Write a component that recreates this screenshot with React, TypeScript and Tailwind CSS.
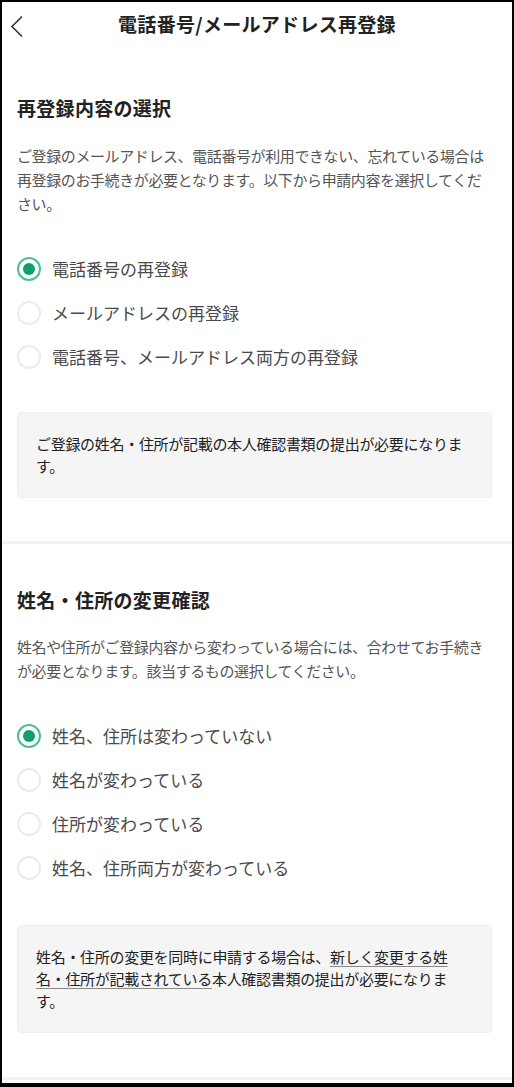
import { useState } from "react";

const FONT = { fontFamily: '"Noto Sans CJK JP", "Noto Sans", sans-serif' };

type Option = { id: string; label: string };

const CONTACT_OPTIONS: Option[] = [
  { id: "tel", label: "電話番号の再登録" },
  { id: "mail", label: "メールアドレスの再登録" },
  { id: "both", label: "電話番号、メールアドレス両方の再登録" },
];

const PROFILE_OPTIONS: Option[] = [
  { id: "none", label: "姓名、住所は変わっていない" },
  { id: "name", label: "姓名が変わっている" },
  { id: "address", label: "住所が変わっている" },
  { id: "both", label: "姓名、住所両方が変わっている" },
];

function RadioList({
  options,
  value,
  onChange,
}: {
  options: Option[];
  value: string;
  onChange: (id: string) => void;
}) {
  return (
    <div className="flex flex-col">
      {options.map((opt) => {
        const checked = opt.id === value;
        return (
          <button
            key={opt.id}
            type="button"
            onClick={() => onChange(opt.id)}
            className="flex h-[44px] items-center gap-[11px] text-left"
          >
            <span
              className={`flex h-[24px] w-[24px] shrink-0 items-center justify-center rounded-full border-2 ${
                checked ? "border-[#4dbf96]" : "border-[#ececec]"
              }`}
            >
              {checked ? <span className="h-[12px] w-[12px] rounded-full bg-[#0e9f6e]" /> : null}
            </span>
            <span className="text-[17px] leading-[24px] text-[#4a4a4a]">{opt.label}</span>
          </button>
        );
      })}
    </div>
  );
}

export default function App() {
  const [contact, setContact] = useState("tel");
  const [profile, setProfile] = useState("none");

  return (
    <div className="min-h-screen bg-black pt-[2px] pl-[2px] pr-[2px] pb-[4px]" style={FONT}>
      <main className="min-h-[1081px] bg-white">
        <header className="relative flex h-[50px] items-center justify-center pb-[6px]">
          <button type="button" className="absolute left-[5px] top-[11px] p-0.5 text-[#333]">
            <svg width="16" height="23" viewBox="0 0 16 23" fill="none">
              <path d="M13 1.5 L3 11.5 L13 21.5" stroke="currentColor" strokeWidth="1.6" />
            </svg>
          </button>
          <h1 className="text-[19px] font-bold leading-[28px] tracking-[0.3px] text-[#222]">
            電話番号/メールアドレス再登録
          </h1>
        </header>

        <section className="pl-[15px] pr-[20px] pt-[42px] pb-[43px]">
          <h2 className="text-[19px] font-bold leading-[28px] tracking-[0.3px] text-[#222]">再登録内容の選択</h2>
          <p className="mt-[22px] text-[15px] leading-[24px] tracking-[-0.4px] text-[#555]">
            ご登録のメールアドレス、電話番号が利用できない、忘れている場合は再登録のお手続きが必要となります。以下から申請内容を選択してください。
          </p>
          <div className="mt-[31px]">
            <RadioList options={CONTACT_OPTIONS} value={contact} onChange={setContact} />
          </div>
          <div className="mt-[33px] rounded-[4px] border border-[#efefef] bg-[#f5f5f5] px-[18px] py-[20px] text-[15px] leading-[22px] tracking-[-0.3px] text-[#222]">
            ご登録の姓名・住所が記載の本人確認書類の提出が必要になります。
          </div>
        </section>

        <div className="h-[3px] bg-[#f2f2f2]" />

        <section className="pl-[15px] pr-[20px] pt-[42px] pb-[44px]">
          <h2 className="text-[19px] font-bold leading-[28px] tracking-[0.3px] text-[#222]">姓名・住所の変更確認</h2>
          <p className="mt-[21px] text-[15px] leading-[24px] tracking-[-0.4px] text-[#555]">
            姓名や住所がご登録内容から変わっている場合には、合わせてお手続きが必要となります。該当するもの選択してください。
          </p>
          <div className="mt-[31px]">
            <RadioList options={PROFILE_OPTIONS} value={profile} onChange={setProfile} />
          </div>
          <div className="mt-[35px] rounded-[4px] border border-[#efefef] bg-[#f5f5f5] px-[18px] py-[20px] text-[15px] leading-[22px] tracking-[-0.3px] text-[#222]">
            姓名・住所の変更を同時に申請する場合は、
            <span className="underline decoration-[#888] underline-offset-[3px]">
              新しく変更する姓名・住所が記載されている
            </span>
            本人確認書類の提出が必要になります。
          </div>
        </section>

        <div className="h-[3px] bg-[#f2f2f2]" />
      </main>
    </div>
  );
}
